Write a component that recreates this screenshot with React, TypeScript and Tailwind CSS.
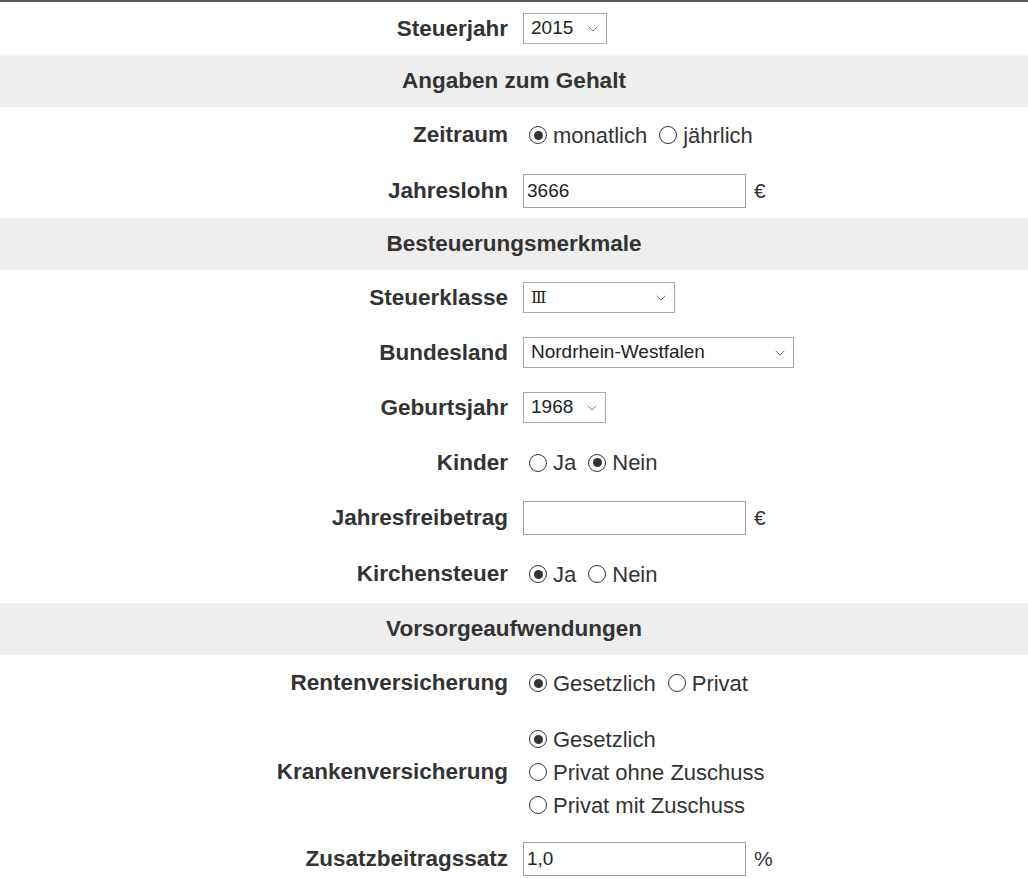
import type { ReactNode } from "react";

const sans = "font-['Liberation_Sans',Arial,sans-serif]";

function Chevron() {
  return (
    <svg viewBox="0 0 10 6" className="h-[6px] w-[10px]" fill="none" stroke="#777" strokeWidth="1">
      <path d="M1 1l4 4 4-4" strokeLinecap="round" strokeLinejoin="round" />
    </svg>
  );
}

function SectionHeader({ children }: { children: ReactNode }) {
  return (
    <div className="flex h-[52px] items-center justify-center bg-[#eeeeee] text-[22.5px] font-bold text-[#333]">
      {children}
    </div>
  );
}

function Row({ label, children, className = "h-[55px]" }: { label: string; children: ReactNode; className?: string }) {
  return (
    <div className={`grid grid-cols-2 items-center ${className}`}>
      <div className="pr-[6px] text-right text-[22.5px] font-bold text-[#333]">{label}</div>
      <div className="flex items-center pl-[9px]">{children}</div>
    </div>
  );
}

function Radio({ checked, label, first = false }: { checked?: boolean; label: string; first?: boolean }) {
  return (
    <label className={`flex items-center ${first ? "ml-[6px]" : "ml-[12px]"}`}>
      <span className="flex h-[18px] w-[18px] items-center justify-center rounded-full border border-[#333] bg-white">
        {checked && <span className="h-[9px] w-[9px] rounded-full bg-[#333]" />}
      </span>
      <span className="ml-[6px] text-[22px] leading-[33px] text-[#333]">{label}</span>
    </label>
  );
}

function SelectBox({ value, width, serif = false }: { value: string; width: string; serif?: boolean }) {
  return (
    <div className={`flex h-[31px] items-center justify-between border border-[#a9a9a9] bg-white pl-[7px] pr-[8px] ${width}`}>
      <span
        className={
          serif
            ? "font-['DejaVu_Serif','Liberation_Serif',serif] text-[16px] text-[#222]"
            : "text-[19px] text-[#222]"
        }
      >
        {value}
      </span>
      <Chevron />
    </div>
  );
}

function TextBox({ value, suffix }: { value: string; suffix: string }) {
  return (
    <>
      <input
        readOnly
        value={value}
        className={`h-[34px] w-[223px] border border-[#a0a0a0] bg-white px-[3px] text-[19px] text-[#222] outline-none ${sans}`}
      />
      <span className="ml-[8px] text-[21px] text-[#333]">{suffix}</span>
    </>
  );
}

export default function App() {
  return (
    <div className={`w-[1028px] border-t-2 border-[#5a5a5a] bg-white ${sans}`}>
      <Row label="Steuerjahr" className="h-[53px]">
        <SelectBox value="2015" width="w-[84px]" />
      </Row>

      <SectionHeader>Angaben zum Gehalt</SectionHeader>
      <Row label="Zeitraum" className="h-[56px]">
        <Radio first checked label="monatlich" />
        <Radio label="jährlich" />
      </Row>
      <Row label="Jahreslohn">
        <TextBox value="3666" suffix="€" />
      </Row>

      <SectionHeader>Besteuerungsmerkmale</SectionHeader>
      <Row label="Steuerklasse">
        <SelectBox value="Ⅲ" width="w-[152px]" serif />
      </Row>
      <Row label="Bundesland">
        <SelectBox value="Nordrhein-Westfalen" width="w-[271px]" />
      </Row>
      <Row label="Geburtsjahr">
        <SelectBox value="1968" width="w-[83px]" />
      </Row>
      <Row label="Kinder">
        <Radio first label="Ja" />
        <Radio checked label="Nein" />
      </Row>
      <Row label="Jahresfreibetrag">
        <TextBox value="" suffix="€" />
      </Row>
      <Row label="Kirchensteuer" className="h-[58px]">
        <Radio first checked label="Ja" />
        <Radio label="Nein" />
      </Row>

      <SectionHeader>Vorsorgeaufwendungen</SectionHeader>
      <Row label="Rentenversicherung" className="h-[56px]">
        <Radio first checked label="Gesetzlich" />
        <Radio label="Privat" />
      </Row>
      <Row label="Krankenversicherung" className="h-[122px]">
        <div className="flex flex-col">
          <Radio first checked label="Gesetzlich" />
          <Radio first label="Privat ohne Zuschuss" />
          <Radio first label="Privat mit Zuschuss" />
        </div>
      </Row>
      <Row label="Zusatzbeitragssatz" className="h-[52px]">
        <TextBox value="1,0" suffix="%" />
      </Row>
    </div>
  );
}
